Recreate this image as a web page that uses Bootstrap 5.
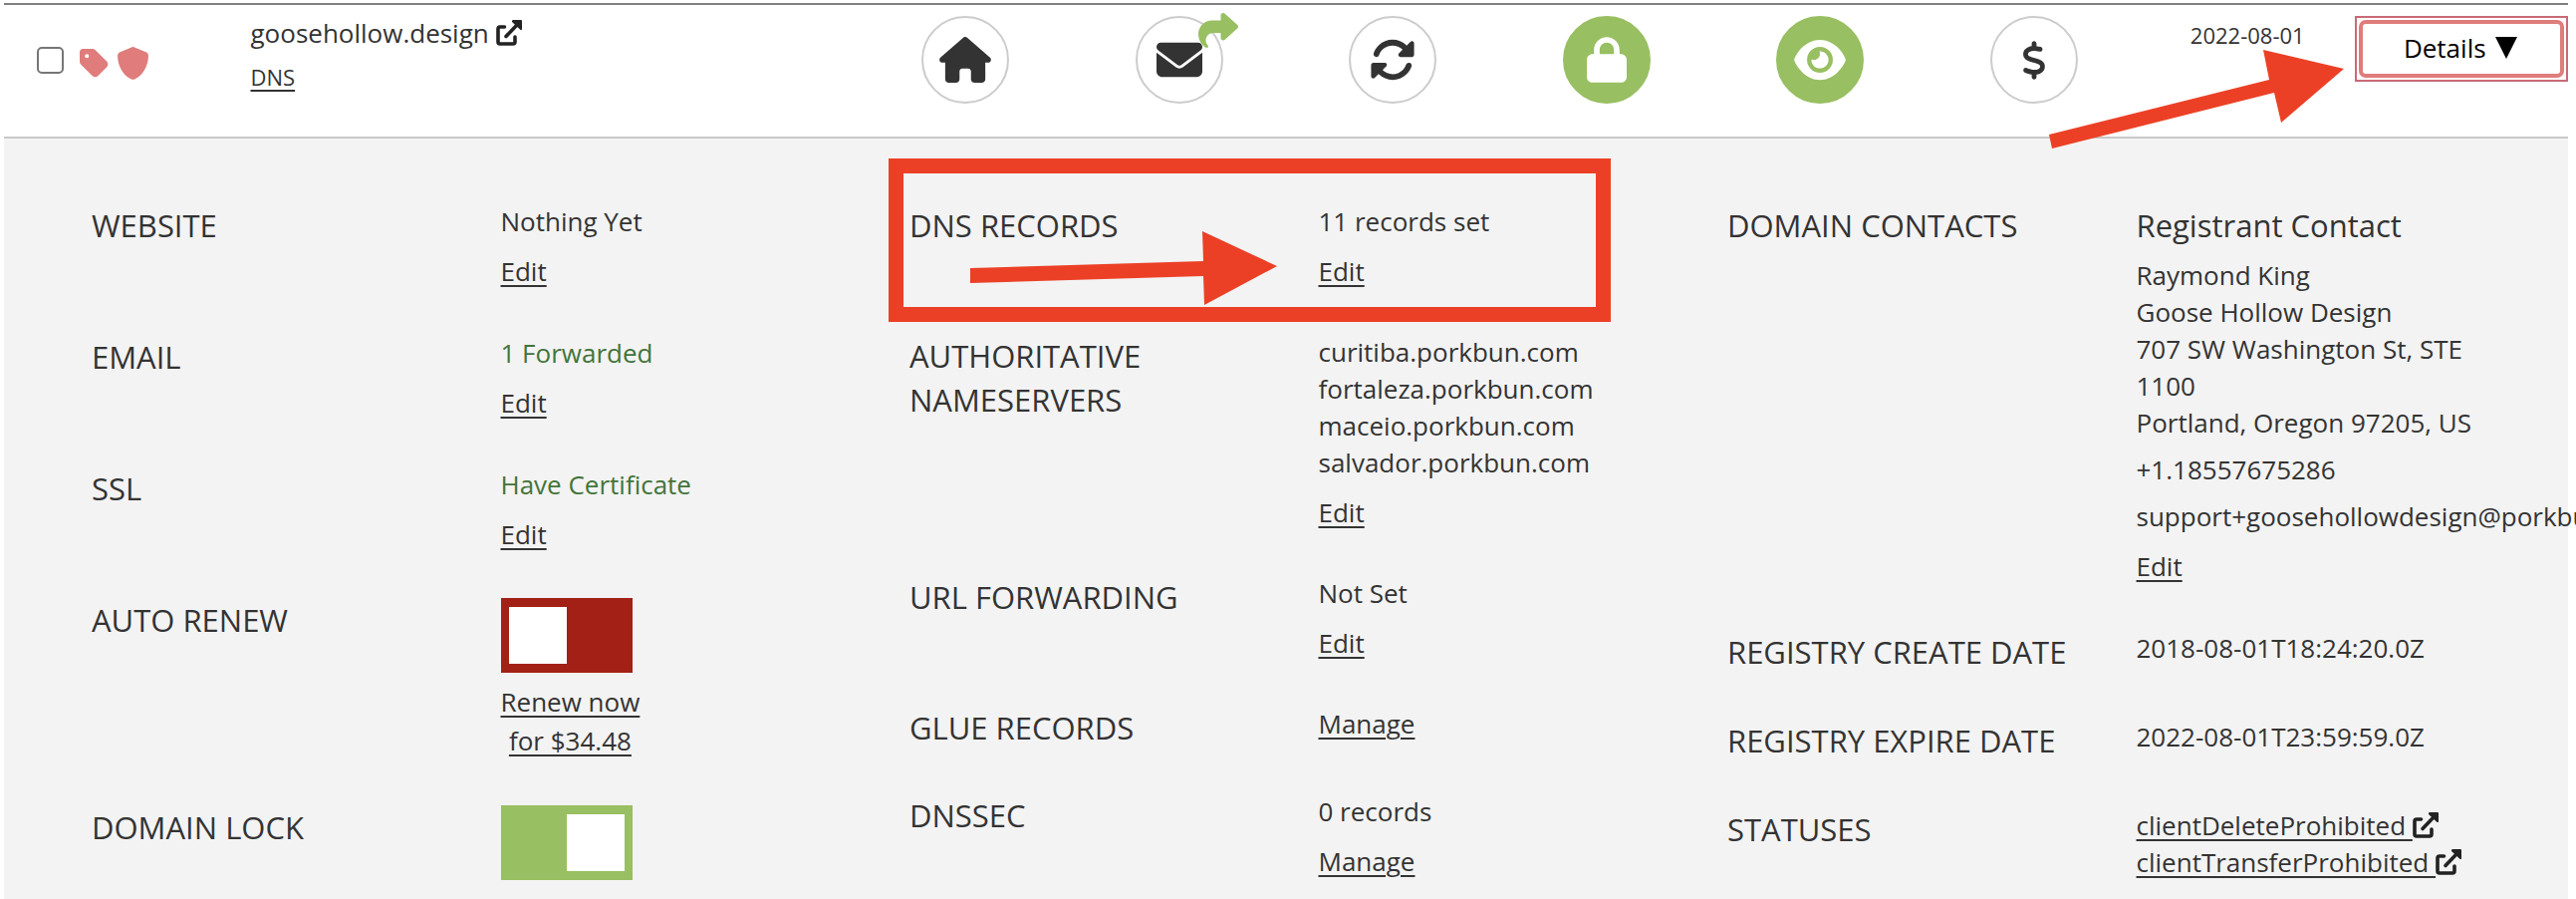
<!DOCTYPE html>
<html lang="en">
<head>
<meta charset="utf-8">
<meta name="viewport" content="width=device-width, initial-scale=1">
<title>Domain Management</title>
<link href="https://cdn.jsdelivr.net/npm/bootstrap@5.3.0/dist/css/bootstrap.min.css" rel="stylesheet">
<style>
  body { font-family: "Open Sans", sans-serif; font-size: 26px; line-height: 37px; color: #333; background: #fff; overflow-x: hidden; }
  .domain-page { padding: 3px 8px 0 4px; }
  .domain-bar { --bs-gutter-x: 66px; margin: 0; border-top: 2px solid #808080; border-bottom: 2px solid #c8c8c8; min-height: 136px; }
  .domain-bar > .tight { padding: 11px 0 0; }
  .domain-name { padding-top: 10px; }
  .ink { color: #333; text-decoration-thickness: 2px; text-underline-offset: 4px; }
  .fine { font-size: 22px; line-height: 31px; }
  .picker { padding: 42px 0 0 33px; gap: 16px; }
  .picker .form-check-input { width: 27px; height: 27px; margin: 0; border: 2px solid #767676; border-radius: 5px; }
  .salmon { color: #e07c7c; }
  .ext-icon { width: 26px; height: 26px; vertical-align: -3px; color: #222; }
  .round-btn { width: 88px; height: 88px; border: 2px solid #ccc; border-radius: 50%; color: #333; background: #fff; padding: 0; display: inline-flex; align-items: center; justify-content: center; position: relative; }
  .round-btn.on { background: #98bf61; border-color: #98bf61; color: #fff; }
  .round-btn .fwd { position: absolute; top: -5px; right: -17px; color: #98bf61; }
  .details-ring { border: 2px solid #c96a76; padding: 2px; }
  .details-btn { display: flex; align-items: center; justify-content: center; gap: 9px; width: 100%; height: 58px; border: 4px solid #e07c7c; border-radius: 7px; background: #fff; color: #000; padding: 0 2px 2px 0; }
  .panel { background: #f3f3f3; padding: 65px 53px 0 58px; min-height: 763px; }
  .panel .row { --bs-gutter-x: 60px; margin: 0; }
  .panel .item { margin-bottom: 45px; }
  .panel .dns-list .item { margin-bottom: 44px; }
  .item dt, .head { font-size: 31px; line-height: 44px; font-weight: 400; }
  .item dd { margin: 0; }
  .step { margin-top: 13px; }
  .near { margin-top: 10px; }
  .good { color: #43743a; }
  .switch-box { appearance: none; display: block; width: 132px; height: 75px; margin: 0; background: #a22015; padding: 9px 8px; border: 0; border-radius: 0; }
  .switch-box::before { content: ""; display: block; width: 58px; height: 57px; background: #fff; }
  .switch-box:checked { background: #98bf61; }
  .switch-box:checked::before { margin-left: auto; }
  .renew { border: 0; background: none; padding: 0; line-height: 39px; display: block; text-decoration: underline; }
  .callout { position: relative; }
  .callout-mark { position: absolute; pointer-events: none; }
  .frame-mark { left: 9px; right: 87px; top: -45px; height: 164px; border: 15px solid #ec4026; }
  .edit-mark { left: 61px; top: 28px; }
  .details-mark { left: -307px; top: 34px; }
  svg { fill: currentColor; }
</style>
</head>
<body>
<svg class="d-none" aria-hidden="true">
  <symbol id="ext" viewBox="0 0 26 26"><path d="M8.500 7H4Q2 7 2 9V22Q2 24 4 24H17Q19 24 19 22V17" fill="none" stroke="currentColor" stroke-width="3.600" stroke-linecap="round"/><path d="M10 16.500L21 5" fill="none" stroke="currentColor" stroke-width="3.600" stroke-linecap="round"/><path d="M17 0H25Q26 0 26 1V9.500Q25 10.500 24 9.500L16 2Q15.500 .5 17 0Z"/></symbol>
</svg>
<main class="domain-page">
  <header class="row domain-bar">
    <div class="col-1 d-flex align-items-start picker">
      <input class="form-check-input" type="checkbox" aria-label="Select goosehollow.design">
      <span class="d-flex salmon gap-2 align-items-center">
        <svg width="29" height="29" viewBox="0 32 448 448"><path fill-rule="evenodd" d="M0 80V229.500c0 17 6.700 33.300 18.700 45.300l176 176c25 25 65.500 25 90.500 0L418.700 317.300c25-25 25-65.500 0-90.500l-176-176c-12-12-28.300-18.700-45.300-18.700H48C21.500 32 0 53.500 0 80zm112 32a32 32 0 1 1 0 64 32 32 0 1 1 0-64z"/></svg>
        <svg width="33" height="33" viewBox="0 0 512 512"><path d="M256 0c4.600 0 9.200 1 13.400 2.900L457.700 82.800c22 9.300 38.400 31 38.300 57.200c-.5 99.200-41.300 280.700-213.600 363.200c-16.700 8-36.100 8-52.800 0C57.300 420.700 16.500 239.200 16 140c-.1-26.200 16.300-47.900 38.300-57.200L242.700 2.900C246.800 1 251.400 0 256 0z"/></svg>
      </span>
    </div>
    <div class="col-3 domain-name">
      <div><a class="ink text-decoration-none" href="#">goosehollow.design <svg class="ext-icon"><use href="#ext"/></svg></a></div>
      <div class="near fine"><a class="ink" href="#">DNS</a></div>
    </div>
    <div class="col-1 tight text-center">
      <button class="round-btn" aria-label="Website"><svg width="52" height="46" viewBox="0 0 576 512"><path d="M575.800 255.500c0 18-15 32.100-32 32.100h-32l.7 160.200c0 2.700-.2 5.400-.5 8.100V472c0 22.100-17.900 40-40 40H456c-1.100 0-2.200 0-3.300-.1c-1.400 .1-2.800 .1-4.200 .1H416 392c-22.100 0-40-17.900-40-40V448 384c0-17.700-14.300-32-32-32H256c-17.700 0-32 14.300-32 32v64 24c0 22.100-17.900 40-40 40H160 128.100c-1.500 0-3-.1-4.500-.2c-1.200 .1-2.400 .2-3.600 .2H104c-22.100 0-40-17.900-40-40V360c0-.9 0-1.900 .1-2.800V287.600H32c-18 0-32-14-32-32.100c0-9 3-17 10-24L266.400 8c7-7 15-8 22-8s15 2 21 7L564.800 231.500c8 7 12 15 11 24z"/></svg></button>
    </div>
    <div class="col-1 tight text-center">
      <button class="round-btn" aria-label="Email"><svg width="46" height="46" viewBox="0 0 512 512"><path d="M48 64C21.500 64 0 85.500 0 112c0 15.100 7.100 29.300 19.200 38.400L236.800 313.600c11.400 8.500 27 8.500 38.400 0L492.800 150.400c12.100-9.100 19.200-23.300 19.200-38.400c0-26.500-21.500-48-48-48H48zM0 176V384c0 35.300 28.700 64 64 64H448c35.300 0 64-28.700 64-64V176L294.400 339.200c-22.800 17.100-54 17.100-76.800 0L0 176z"/></svg><svg class="fwd" width="40" height="35" viewBox="0 32 512 448"><path d="M307 34.800c-11.500 5.100-19 16.600-19 29.200v64H176C78.800 128 0 206.800 0 304C0 417.300 81.500 467.900 100.200 478.100c2.500 1.400 5.300 1.900 8.100 1.900c10.900 0 19.700-8.900 19.700-19.700c0-7.500-4.300-14.400-9.800-19.500C108.800 431.900 96 414.400 96 384c0-53 43-96 96-96h96v64c0 12.600 7.400 24.100 19 29.200s25 3 34.400-5.400l160-144c6.700-6.100 10.600-14.700 10.600-23.800s-3.800-17.700-10.600-23.800l-160-144c-9.400-8.500-22.900-10.600-34.400-5.400z"/></svg></button>
    </div>
    <div class="col-1 tight text-center">
      <button class="round-btn" aria-label="Auto renew"><svg width="46" height="46" viewBox="0 0 512 512"><path d="M142.900 142.900c62.200-62.200 162.700-62.500 225.300-1L327 183c-6.900 6.900-8.900 17.200-5.200 26.200s12.500 14.800 22.200 14.800H463.500H472c13.300 0 24-10.700 24-24V72c0-9.700-5.800-18.500-14.800-22.200s-19.300-1.700-26.200 5.200L413.400 96.600c-87.600-86.500-228.700-86.200-315.800 1C73.200 122 55.600 150.700 44.800 181.400c-5.900 16.700 2.900 34.900 19.500 40.800s34.900-2.900 40.800-19.500c7.700-21.800 20.200-42.300 37.800-59.800zM16 312v7.600 .7V440c0 9.700 5.800 18.500 14.800 22.200s19.300 1.700 26.200-5.200l41.600-41.600c87.600 86.500 228.700 86.200 315.800-1c24.400-24.400 42.100-53.100 52.900-83.700c5.900-16.700-2.900-34.900-19.500-40.800s-34.900 2.900-40.800 19.500c-7.700 21.800-20.200 42.300-37.800 59.800c-62.200 62.200-162.700 62.500-225.300 1L185 329c6.900-6.900 8.900-17.200 5.200-26.200s-12.500-14.800-22.200-14.800H48.400h-.7H40c-13.300 0-24 10.700-24 24z"/></svg></button>
    </div>
    <div class="col-1 tight text-center">
      <button class="round-btn on" aria-label="Domain lock"><svg width="40" height="46" viewBox="0 0 448 512"><path d="M144 144v48H304V144c0-44.200-35.800-80-80-80s-80 35.800-80 80zM80 192V144C80 64.500 144.500 0 224 0s144 64.500 144 144v48h16c35.300 0 64 28.700 64 64V448c0 35.300-28.700 64-64 64H64c-35.300 0-64-28.700-64-64V256c0-35.300 28.700-64 64-64H80z"/></svg></button>
    </div>
    <div class="col-1 tight text-center">
      <button class="round-btn on" aria-label="Privacy"><svg width="52" height="46" viewBox="0 0 576 512"><path fill-rule="evenodd" d="M288 32c-80.800 0-145.500 36.800-192.600 80.600C48.600 156 17.300 208 2.500 243.700c-3.300 7.900-3.300 16.700 0 24.600C17.300 304 48.600 356 95.400 399.400C142.500 443.200 207.200 480 288 480s145.500-36.800 192.600-80.600c46.800-43.500 78.100-95.400 93-131.100c3.300-7.900 3.300-16.700 0-24.600c-14.900-35.700-46.200-87.700-93-131.100C433.500 68.800 368.800 32 288 32zM144 256a144 144 0 1 1 288 0 144 144 0 1 1 -288 0zm144-64c0 35.300-28.700 64-64 64c-7.100 0-13.900-1.200-20.300-3.300c-5.500-1.800-11.900 1.600-11.700 7.400c.3 6.900 1.300 13.800 3.200 20.700c13.700 51.200 66.400 81.600 117.600 67.900s81.600-66.400 67.900-117.600c-11.100-41.500-47.800-69.400-88.600-71.100c-5.800-.2-9.200 6.100-7.400 11.700c2.100 6.400 3.300 13.200 3.300 20.300z"/></svg></button>
    </div>
    <div class="col-1 tight text-center">
      <button class="round-btn" aria-label="Price"><svg width="24" height="39" viewBox="0 0 320 512"><path d="M160 0c17.700 0 32 14.300 32 32V67.700c1.600 .2 3.100 .4 4.700 .7c.4 .1 .7 .1 1.100 .2l48 8.800c17.400 3.200 28.900 19.900 25.700 37.200s-19.900 28.900-37.200 25.700l-47.500-8.700c-31.300-4.600-58.900-1.500-78.300 6.200s-27.200 18.300-29 28.100c-2 10.700-.5 16.700 1.200 20.400c1.800 3.900 5.500 8.300 12.800 13.200c16.300 10.700 41.300 17.700 73.700 26.300l2.900 .8c28.600 7.600 63.600 16.800 89.600 33.800c14.200 9.300 27.600 21.900 35.900 39.500c8.500 17.900 10.300 37.900 6.400 59.200c-6.900 38-33.100 63.400-65.600 76.700c-13.700 5.600-28.600 9.200-44.400 11V480c0 17.700-14.300 32-32 32s-32-14.300-32-32V445.100c-.4-.1-.9-.1-1.300-.2l-.2 0 0 0c-24.400-3.800-64.500-14.300-91.500-26.300c-16.100-7.200-23.400-26.100-16.200-42.200s26.100-23.400 42.200-16.200c20.900 9.300 55.300 18.500 75.200 21.600c31.900 4.700 58.200 2 76-5.300c16.900-6.900 24.600-16.900 26.800-28.900c1.900-10.600 .4-16.700-1.300-20.400c-1.900-4-5.600-8.400-13-13.300c-16.400-10.700-41.500-17.700-74-26.300l-2.800-.7 0 0C119.400 279.300 84.400 270 58.400 253c-14.200-9.300-27.500-22-35.800-39.600c-8.400-17.900-10.100-37.900-6.100-59.200C23.700 116 52.300 91.200 84.800 78.300c13.300-5.300 27.900-8.900 43.200-11V32c0-17.700 14.300-32 32-32z"/></svg></button>
    </div>
    <div class="col-1 tight text-center"><time class="fine d-block pt-1" datetime="2022-08-01">2022-08-01</time></div>
    <div class="col-1 tight callout">
      <div class="details-ring">
        <button class="details-btn">Details <svg width="22" height="22" viewBox="0 0 22 22" aria-hidden="true"><path d="M0 0H22L11 22Z"/></svg></button>
      </div>
      <svg class="callout-mark details-mark" width="300" height="120" viewBox="0 0 300 120" aria-hidden="true"><path fill="#ec4026" d="M0 96L221 41 215 11 296 30 233 84 226 54 3 110Z"/></svg>
    </div>
  </header>

  <section class="panel">
    <div class="row">
      <div class="col-4 p-0">
        <dl class="row item">
          <dt class="col-6">WEBSITE</dt>
          <dd class="col-6"><div>Nothing Yet</div><div class="step"><a class="ink" href="#">Edit</a></div></dd>
        </dl>
        <dl class="row item">
          <dt class="col-6">EMAIL</dt>
          <dd class="col-6"><div class="good">1 Forwarded</div><div class="step"><a class="ink" href="#">Edit</a></div></dd>
        </dl>
        <dl class="row item">
          <dt class="col-6">SSL</dt>
          <dd class="col-6"><div class="good">Have Certificate</div><div class="step"><a class="ink" href="#">Edit</a></div></dd>
        </dl>
        <dl class="row item">
          <dt class="col-6"><label for="renew">AUTO RENEW</label></dt>
          <dd class="col-6"><input class="switch-box" id="renew" type="checkbox" role="switch"><button class="renew ink near">Renew now<br>for $34.48</button></dd>
        </dl>
        <dl class="row mb-0">
          <dt class="col-6 head"><label for="lock">DOMAIN LOCK</label></dt>
          <dd class="col-6 mb-0"><input class="switch-box" id="lock" type="checkbox" role="switch" checked></dd>
        </dl>
      </div>

      <div class="col-4 p-0 dns-list">
        <dl class="row item callout">
          <dt class="col-6">DNS RECORDS</dt>
          <dd class="col-6"><div>11 records set</div><div class="step"><a class="ink" href="#">Edit</a></div>
            <span class="callout-mark frame-mark"></span>
            <svg class="callout-mark edit-mark" width="340" height="80" viewBox="0 0 340 80" aria-hidden="true"><path fill="#ec4026" d="M30 37L264 30 263 0 338 35 265 74 264 45 30 52Z"/></svg>
          </dd>
        </dl>
        <dl class="row item">
          <dt class="col-6">AUTHORITATIVE NAMESERVERS</dt>
          <dd class="col-6"><div>curitiba.porkbun.com</div><div>fortaleza.porkbun.com</div><div>maceio.porkbun.com</div><div>salvador.porkbun.com</div><div class="step"><a class="ink" href="#">Edit</a></div></dd>
        </dl>
        <dl class="row item">
          <dt class="col-6">URL FORWARDING</dt>
          <dd class="col-6"><div>Not Set</div><div class="step"><a class="ink" href="#">Edit</a></div></dd>
        </dl>
        <dl class="row item">
          <dt class="col-6">GLUE RECORDS</dt>
          <dd class="col-6"><a class="ink" href="#">Manage</a></dd>
        </dl>
        <dl class="row mb-0">
          <dt class="col-6 head">DNSSEC</dt>
          <dd class="col-6 mb-0"><div>0 records</div><div class="step"><a class="ink" href="#">Manage</a></div></dd>
        </dl>
      </div>

      <div class="col-4 p-0">
        <dl class="row item">
          <dt class="col-6">DOMAIN CONTACTS</dt>
          <dd class="col-6">
            <div class="head">Registrant Contact</div>
            <address class="near mb-0">Raymond King<br>Goose Hollow Design<br>707 SW Washington St, STE 1100<br>Portland, Oregon 97205, US</address>
            <div class="near">+1.18557675286</div>
            <div class="near">support+goosehollowdesign@porkbun.com</div>
            <div class="step"><a class="ink" href="#">Edit</a></div>
          </dd>
        </dl>
        <dl class="row item">
          <dt class="col-6">REGISTRY CREATE DATE</dt>
          <dd class="col-6">2018-08-01T18:24:20.0Z</dd>
        </dl>
        <dl class="row item">
          <dt class="col-6">REGISTRY EXPIRE DATE</dt>
          <dd class="col-6">2022-08-01T23:59:59.0Z</dd>
        </dl>
        <dl class="row mb-0">
          <dt class="col-6 head">STATUSES</dt>
          <dd class="col-6 mb-0"><div><a class="ink" href="#">clientDeleteProhibited <svg class="ext-icon"><use href="#ext"/></svg></a></div><div><a class="ink" href="#">clientTransferProhibited <svg class="ext-icon"><use href="#ext"/></svg></a></div></dd>
        </dl>
      </div>
    </div>
  </section>
</main>
<script src="https://cdn.jsdelivr.net/npm/bootstrap@5.3.0/dist/js/bootstrap.bundle.min.js"></script>
</body>
</html>
